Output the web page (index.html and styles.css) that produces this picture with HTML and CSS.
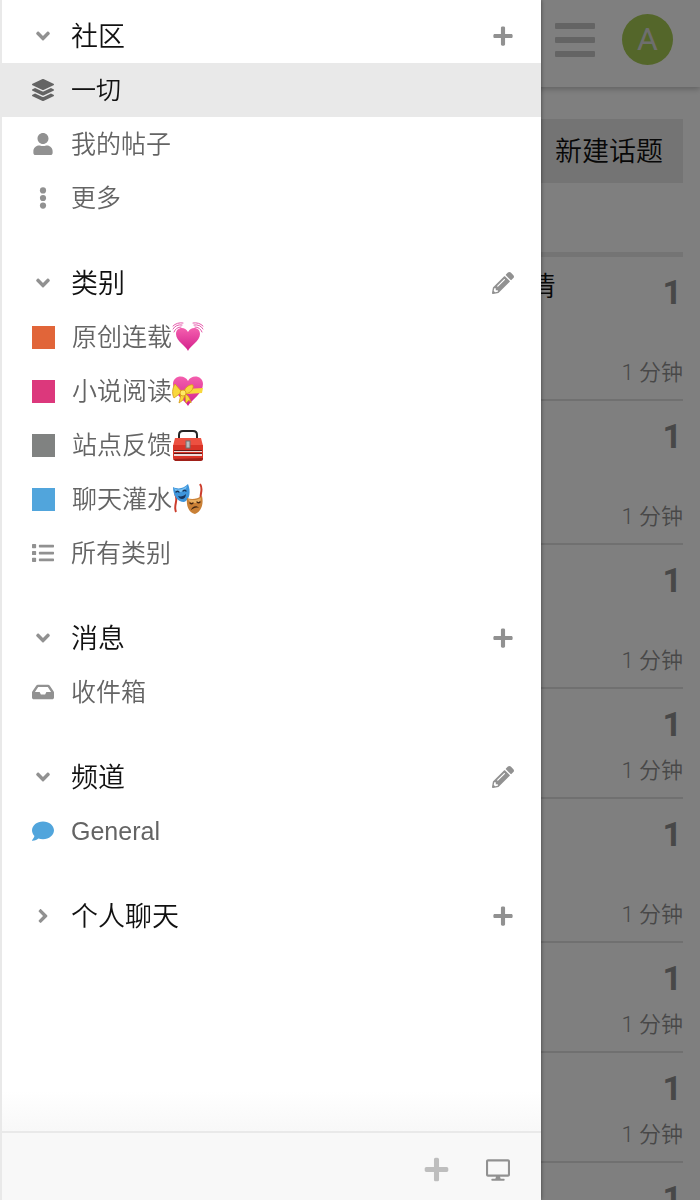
FILE: index.html
```
<!DOCTYPE html>
<html lang="zh-CN">
<head>
  <meta charset="UTF-8">
  <meta name="viewport" content="width=device-width, initial-scale=1.0">
  <title>社区</title>
  <link rel="stylesheet" href="styles.css">
</head>
<body>
  <!-- Icon sprite -->
  <svg class="sprite" aria-hidden="true">
    <symbol id="angle-down" viewBox="-96 0 512 512"><path d="M143 352.3L7 216.3c-9.4-9.4-9.4-24.6 0-33.9l22.6-22.6c9.4-9.4 24.6-9.4 33.9 0l96.4 96.4 96.4-96.4c9.4-9.4 24.6-9.4 33.9 0l22.6 22.6c9.4 9.4 9.4 24.6 0 33.9l-136 136c-9.2 9.4-24.4 9.4-33.8 0z"/></symbol>
    <symbol id="angle-right" viewBox="-128 0 512 512"><path d="M224.3 273l-136 136c-9.4 9.4-24.6 9.4-33.9 0l-22.6-22.6c-9.4-9.4-9.4-24.6 0-33.9l96.4-96.4-96.4-96.4c-9.4-9.4-9.4-24.6 0-33.9L54.3 103c9.4-9.4 24.6-9.4 33.9 0l136 136c9.5 9.4 9.5 24.6.1 34z"/></symbol>
    <symbol id="plus" viewBox="-32 0 512 512"><path d="M416 208H272V64c0-17.67-14.33-32-32-32h-32c-17.67 0-32 14.33-32 32v144H32c-17.67 0-32 14.33-32 32v32c0 17.67 14.33 32 32 32h144v144c0 17.67 14.33 32 32 32h32c17.67 0 32-14.33 32-32V304h144c17.67 0 32-14.33 32-32v-32c0-17.67-14.33-32-32-32z"/></symbol>
    <symbol id="pencil" viewBox="0 0 512 512"><path d="M497.9 142.1l-46.1 46.1c-4.7 4.7-12.3 4.7-17 0l-111-111c-4.7-4.7-4.7-12.3 0-17l46.1-46.1c18.7-18.7 49.1-18.7 67.9 0l60.1 60.1c18.8 18.7 18.8 49.1 0 67.9zM284.2 99.8L21.6 362.4.4 483.9c-2.9 16.4 11.4 30.6 27.8 27.8l121.5-21.3 262.6-262.6c4.7-4.7 4.7-12.3 0-17l-111-111c-4.8-4.7-12.4-4.7-17.1 0zM124.1 339.9c-5.5-5.5-5.5-14.3 0-19.8l154-154c5.5-5.5 14.3-5.5 19.8 0s5.5 14.3 0 19.8l-154 154c-5.5 5.5-14.3 5.5-19.8 0zM88 424h48v36.3l-64.5 11.3-31.1-31.1L51.7 376H88v48z"/></symbol>
    <symbol id="layers" viewBox="0 0 512 512"><path d="M12.41 148.02l232.94 105.67c6.8 3.09 14.49 3.09 21.29 0l232.94-105.67c16.55-7.51 16.55-32.52 0-40.03L266.65 2.31a25.607 25.607 0 0 0-21.29 0L12.41 107.98c-16.55 7.51-16.55 32.53 0 40.04zm487.18 88.28l-58.09-26.33-161.64 73.27c-7.56 3.43-15.59 5.17-23.86 5.17s-16.29-1.74-23.86-5.17L70.51 209.97l-58.1 26.33c-16.55 7.5-16.55 32.5 0 40l232.94 105.59c6.8 3.08 14.49 3.08 21.29 0L499.59 276.3c16.55-7.5 16.55-32.5 0-40zm0 127.8l-57.87-26.23-161.86 73.37c-7.56 3.43-15.59 5.17-23.86 5.17s-16.29-1.74-23.86-5.17L70.29 337.87 12.41 364.1c-16.55 7.5-16.55 32.5 0 40l232.94 105.59c6.8 3.08 14.49 3.08 21.29 0L499.59 404.1c16.55-7.5 16.55-32.5 0-40z"/></symbol>
    <symbol id="user" viewBox="-32 0 512 512"><path d="M224 256c70.7 0 128-57.3 128-128S294.7 0 224 0 96 57.3 96 128s57.3 128 128 128zm89.6 32h-16.7c-22.2 10.2-46.9 16-72.9 16s-50.6-5.8-72.9-16h-16.7C60.2 288 0 348.2 0 422.4V464c0 26.5 21.5 48 48 48h352c26.5 0 48-21.5 48-48v-41.6c0-74.2-60.2-134.4-134.4-134.4z"/></symbol>
    <symbol id="dots" viewBox="0 0 512 512"><circle cx="256" cy="80" r="72"/><circle cx="256" cy="256" r="72"/><circle cx="256" cy="432" r="72"/></symbol>
    <symbol id="list" viewBox="0 0 512 512"><path d="M80 368H16a16 16 0 0 0-16 16v64a16 16 0 0 0 16 16h64a16 16 0 0 0 16-16v-64a16 16 0 0 0-16-16zm0-320H16A16 16 0 0 0 0 64v64a16 16 0 0 0 16 16h64a16 16 0 0 0 16-16V64a16 16 0 0 0-16-16zm0 160H16a16 16 0 0 0-16 16v64a16 16 0 0 0 16 16h64a16 16 0 0 0 16-16v-64a16 16 0 0 0-16-16zm416 176H176a16 16 0 0 0-16 16v32a16 16 0 0 0 16 16h320a16 16 0 0 0 16-16v-32a16 16 0 0 0-16-16zm0-320H176a16 16 0 0 0-16 16v32a16 16 0 0 0 16 16h320a16 16 0 0 0 16-16V80a16 16 0 0 0-16-16zm0 160H176a16 16 0 0 0-16 16v32a16 16 0 0 0 16 16h320a16 16 0 0 0 16-16v-32a16 16 0 0 0-16-16z"/></symbol>
    <symbol id="inbox" viewBox="0 0 576 512"><path d="M567.938 243.908L462.25 85.374A48.003 48.003 0 0 0 422.311 64H153.689a48 48 0 0 0-39.938 21.374L8.062 243.908A47.994 47.994 0 0 0 0 270.533V400c0 26.51 21.49 48 48 48h480c26.51 0 48-21.49 48-48V270.533a47.994 47.994 0 0 0-8.062-26.625zM162.252 128h251.497l85.333 128H376l-32 64H232l-32-64H76.918l85.334-128z"/></symbol>
    <symbol id="comment" viewBox="0 0 512 512"><path d="M256 32C114.6 32 0 125.1 0 240c0 49.6 21.4 95 57 130.7C44.5 421.1 2.7 466 2.2 466.5c-2.2 2.3-2.8 5.7-1.5 8.7S4.8 480 8 480c66.3 0 116-31.8 140.6-51.4 32.7 12.3 69 19.4 107.4 19.4 141.4 0 256-93.1 256-208S397.4 32 256 32z"/></symbol>
    <symbol id="desktop" viewBox="0 0 576 512"><path d="M528 0H48C21.5 0 0 21.5 0 48v320c0 26.5 21.5 48 48 48h192l-16 48h-72c-13.3 0-24 10.7-24 24s10.7 24 24 24h272c13.3 0 24-10.7 24-24s-10.7-24-24-24h-72l-16-48h192c26.5 0 48-21.5 48-48V48c0-26.5-21.5-48-48-48zm-2 366H50V50h476v316z"/></symbol>
    <symbol id="bars" viewBox="0 0 40 36"><rect y="1" width="40" height="6" rx="1"/><rect y="15" width="40" height="6" rx="1"/><rect y="29" width="40" height="6" rx="1"/></symbol>
  </svg>

  <header class="site-header">
    <button type="button" class="icon-button" aria-label="菜单"><svg class="bars"><use href="#bars"/></svg></button>
    <a href="#" class="avatar">A</a>
  </header>

  <main class="content">
    <div class="toolbar">
      <button type="button" class="new-topic">新建话题</button>
    </div>
    <ul class="topics">
      <li class="topic tall"><a href="#" class="topic-title">情</a><div class="topic-stats"><span class="count">1</span><span class="age">1 分钟</span></div></li>
      <li class="topic tall"><div class="topic-stats"><span class="count">1</span><span class="age">1 分钟</span></div></li>
      <li class="topic tall"><div class="topic-stats"><span class="count">1</span><span class="age">1 分钟</span></div></li>
      <li class="topic"><div class="topic-stats"><span class="count">1</span><span class="age">1 分钟</span></div></li>
      <li class="topic tall"><div class="topic-stats"><span class="count">1</span><span class="age">1 分钟</span></div></li>
      <li class="topic"><div class="topic-stats"><span class="count">1</span><span class="age">1 分钟</span></div></li>
      <li class="topic"><div class="topic-stats"><span class="count">1</span><span class="age">1 分钟</span></div></li>
      <li class="topic"><div class="topic-stats"><span class="count">1</span></div></li>
    </ul>
  </main>

  <div class="overlay"></div>

  <aside class="sidebar">
    <nav class="sections">
      <section class="section">
        <div class="section-header">
          <button type="button" class="section-toggle"><svg class="icon"><use href="#angle-down"/></svg><span class="label">社区</span></button>
          <button type="button" class="icon-button" aria-label="新建"><svg class="icon"><use href="#plus"/></svg></button>
        </div>
        <a href="#" class="link active"><svg class="icon"><use href="#layers"/></svg><span class="label">一切</span></a>
        <a href="#" class="link"><svg class="icon"><use href="#user"/></svg><span class="label">我的帖子</span></a>
        <a href="#" class="link"><svg class="icon"><use href="#dots"/></svg><span class="label">更多</span></a>
      </section>

      <section class="section">
        <div class="section-header">
          <button type="button" class="section-toggle"><svg class="icon"><use href="#angle-down"/></svg><span class="label">类别</span></button>
          <button type="button" class="icon-button" aria-label="编辑类别"><svg class="icon"><use href="#pencil"/></svg></button>
        </div>
        <a href="#" class="link"><span class="square orange"></span><span class="label">原创连载</span><svg class="emoji" viewBox="0 0 32 32">
          <defs><linearGradient id="heart-fill" x1="0" y1="0" x2="0" y2="1"><stop offset="0" stop-color="#f45fae"/><stop offset="1" stop-color="#d3208c"/></linearGradient></defs>
          <path fill="url(#heart-fill)" d="M16 30C14 25 4 20 4 13c0-7 9-8 12-2 3-6 12-5 12 2 0 7-10 12-12 17z"/>
          <path fill="none" stroke="#e658ab" stroke-width="1" stroke-linecap="round" d="M1 5Q5 1 11 2M1 8Q4 3 10 4M2 11Q4 6 9 6M31 5Q27 1 21 2M31 8Q28 3 22 4M30 11Q28 6 23 6"/>
        </svg></a>
        <a href="#" class="link"><span class="square pink"></span><span class="label">小说阅读</span><svg class="emoji" viewBox="0 0 32 32">
          <path fill="url(#heart-fill)" d="M16 31C13 25 1 19 1 9 1 0 13-1 16 6c3-7 15-6 15 3 0 10-12 16-15 22z"/>
          <path fill="#f8d83d" d="M14 14l17-1-1 5-15 1z"/>
          <path fill="#f8d83d" stroke="#d79a16" stroke-width=".8" stroke-linejoin="round" d="M10 17L3 9c-3 5-3 10-1 14zM12 17c1-5 6-8 9-7 1 4-2 8-8 9zM9 19l-2 9 4-3 2-5zM13 20l1 8 3-3 2 3c-1-5-3-8-6-9z"/>
          <circle cx="11" cy="18" r="3" fill="#ffe965" stroke="#d79a16" stroke-width=".8"/>
        </svg></a>
        <a href="#" class="link"><span class="square gray"></span><span class="label">站点反馈</span><svg class="emoji" viewBox="0 0 32 32">
          <path fill="none" stroke="#252525" stroke-width="2" d="M7 10V6c0-3 2-4 4-4h10c2 0 4 1 4 4v4"/>
          <path fill="#ed5040" d="M3 9h26l2 8H1z"/>
          <path fill="#d93427" d="M1 16h30v13c0 1-1 2-2 2H3c-1 0-2-1-2-2z"/>
          <path fill="#a02019" d="M1 30l30-1v1c0 1-1 2-2 2H3z"/>
          <path fill="#ecdcda" d="M2 22h28v1H2zM2 25h28v2H2z"/>
          <path fill="#651815" d="M2 21h28v1H2zM2 24h28v1H2z"/>
          <rect x="14" y="12" width="4" height="7" fill="#bbb" stroke="#707070"/>
        </svg></a>
        <a href="#" class="link"><span class="square blue"></span><span class="label">聊天灌水</span><svg class="emoji" viewBox="0 0 32 32">
          <path fill="none" stroke="#cc3d2c" stroke-width="2" d="M3 11c4 6-2 11 1 18M28 1c4 6-1 9 1 18"/>
          <path fill="#3e95db" d="M1 4c6 3 11 1 15-3 3 7 2 16-4 18C6 19 1 13 1 4z"/>
          <path fill="#78c2f4" d="M2 5c5 3 9 1 13-2-1 4-5 6-8 6-2 0-4-1-5-4z"/>
          <path fill="none" stroke="#17345c" stroke-width="1.3" stroke-linecap="round" d="M4 9c1-1 2-1 3 0M11 8c1-1 2-1 3 0"/>
          <path fill="#17345c" d="M6 13c3 1 6 0 8-2 0 3-2 5-4 5-2 0-3-1-4-3z"/>
          <path fill="#c98036" d="M15 15c5 2 10 1 15-2 2 8-1 16-7 18-6-1-9-8-8-16z"/>
          <path fill="#e6ac60" d="M16 16c5 2 9 1 13-1 0 4-3 5-6 5s-6-1-7-4z"/>
          <path fill="none" stroke="#422512" stroke-width="1.3" stroke-linecap="round" d="M18 20c1 1 2 1 3 0M25 19c1 1 2 1 3 0"/>
          <path fill="#422512" d="M19 27c1-4 6-5 8-2-3-1-5 0-8 2z"/>
        </svg></a>
        <a href="#" class="link"><svg class="icon"><use href="#list"/></svg><span class="label">所有类别</span></a>
      </section>

      <section class="section">
        <div class="section-header">
          <button type="button" class="section-toggle"><svg class="icon"><use href="#angle-down"/></svg><span class="label">消息</span></button>
          <button type="button" class="icon-button" aria-label="新消息"><svg class="icon"><use href="#plus"/></svg></button>
        </div>
        <a href="#" class="link"><svg class="icon"><use href="#inbox"/></svg><span class="label">收件箱</span></a>
      </section>

      <section class="section">
        <div class="section-header">
          <button type="button" class="section-toggle"><svg class="icon"><use href="#angle-down"/></svg><span class="label">频道</span></button>
          <button type="button" class="icon-button" aria-label="编辑频道"><svg class="icon"><use href="#pencil"/></svg></button>
        </div>
        <a href="#" class="link"><svg class="icon channel"><use href="#comment"/></svg><span>General</span></a>
      </section>

      <section class="section">
        <div class="section-header">
          <button type="button" class="section-toggle"><svg class="icon"><use href="#angle-right"/></svg><span class="label">个人聊天</span></button>
          <button type="button" class="icon-button" aria-label="新聊天"><svg class="icon"><use href="#plus"/></svg></button>
        </div>
      </section>
    </nav>

    <footer class="sidebar-footer">
      <button type="button" class="icon-button add" aria-label="添加分区"><svg class="icon"><use href="#plus"/></svg></button>
      <button type="button" class="icon-button" aria-label="桌面视图"><svg class="icon"><use href="#desktop"/></svg></button>
    </footer>
  </aside>
</body>
</html>
```
FILE: styles.css
```
* {
  box-sizing: border-box;
}

body {
  margin: 0;
  height: 100vh;
  overflow: hidden;
  background: #fff;
  color: #111;
  font-family: "Liberation Sans", "Noto Sans CJK SC", sans-serif;
  font-size: 25px;
  font-weight: 350;
}

button {
  padding: 0;
  border: none;
  background: none;
  color: inherit;
  font: inherit;
  cursor: pointer;
}

a {
  color: inherit;
  text-decoration: none;
}

svg {
  display: block;
  fill: currentColor;
}

.sprite {
  display: none;
}

.icon {
  width: 22px;
  height: 22px;
  flex: none;
  color: #919191;
}

.icon-button {
  display: flex;
}

/* Page behind the drawer */
.site-header {
  display: flex;
  justify-content: flex-end;
  align-items: center;
  gap: 27px;
  height: 87px;
  padding: 0 27px 8px 0;
  box-shadow: 0 2px 6px rgba(0, 0, 0, 0.25);
}

.bars {
  width: 40px;
  height: 36px;
  color: #c8c8c8;
}

.avatar {
  width: 51px;
  height: 51px;
  border-radius: 50%;
  background: #a8cc54;
  color: #ddd;
  font-family: Roboto, sans-serif;
  font-size: 32px;
  font-weight: 400;
  line-height: 51px;
  text-align: center;
}

.content {
  padding: 32px 17px 0;
}

.toolbar {
  display: flex;
  justify-content: flex-end;
  margin-bottom: 69px;
}

.new-topic {
  height: 64px;
  padding: 0 20px 4px;
  background: #e9e9e9;
  font-size: 27px;
}

.topics {
  margin: 0;
  padding: 0;
  border-top: 5px solid #e9e9e9;
  list-style: none;
}

.topic {
  display: flex;
  justify-content: flex-end;
  min-height: 110px;
  padding: 15px 0 10px;
  border-bottom: 2px solid #e0e0e0;
}

.topic.tall {
  min-height: 144px;
}

.topic-title {
  margin-right: 66px;
  font-size: 27px;
  line-height: 30px;
}

.topic-stats {
  display: flex;
  flex-direction: column;
  justify-content: space-between;
  align-items: flex-end;
  color: #919191;
  font-family: Roboto, "Noto Sans CJK SC", sans-serif;
}

.count {
  padding-right: 1px;
  font-size: 34px;
  font-weight: 700;
  line-height: 40px;
}

.age {
  font-size: 22px;
  line-height: 32px;
}

.overlay {
  position: fixed;
  inset: 0;
  background: rgba(0, 0, 0, 0.5);
}

/* Drawer */
.sidebar {
  position: fixed;
  top: 0;
  bottom: 0;
  left: 0;
  display: flex;
  flex-direction: column;
  width: 541px;
  max-width: 90%;
  border-left: 2px solid #e9e9e9;
  background: #fff;
  box-shadow: 0 0 4px rgba(0, 0, 0, 0.5);
}

.sections {
  display: flex;
  flex: 1;
  flex-direction: column;
  gap: 31px;
  padding-top: 9px;
  overflow: hidden;
}

.section-header {
  display: flex;
  justify-content: space-between;
  align-items: center;
  height: 54px;
  padding: 0 27px 0 30px;
}

.section-toggle {
  display: flex;
  align-items: center;
  gap: 17px;
  font-size: 27px;
}

.link {
  display: flex;
  align-items: center;
  height: 54px;
  padding-left: 30px;
  color: #646464;
}

/* CJK glyphs sit low in the line box */
.label {
  padding-bottom: 4px;
}

.link .icon,
.square {
  margin-right: 17px;
}

.link.active {
  background: #e9e9e9;
  color: #111;
}

.link.active .icon {
  color: #646464;
}

.link .channel {
  color: #51a5dc;
}

.square {
  width: 23px;
  height: 23px;
}

.orange {
  background: #e16539;
}

.pink {
  background: #dc387c;
}

.gray {
  background: #808281;
}

.blue {
  background: #51a5dc;
}

.emoji {
  width: 32px;
  height: 32px;
}

.sidebar-footer {
  position: relative;
  display: flex;
  justify-content: flex-end;
  align-items: center;
  gap: 36px;
  height: 69px;
  padding: 6px 31px 0 0;
  border-top: 2px solid #e9e9e9;
  background: #f8f8f8;
}

/* Fades the list out above the footer */
.sidebar-footer::before {
  content: "";
  position: absolute;
  right: 0;
  bottom: calc(100% + 2px);
  left: 0;
  height: 40px;
  background: linear-gradient(to bottom, rgba(248, 248, 248, 0), #f8f8f8);
}

.sidebar-footer .icon {
  width: 24px;
  height: 24px;
}

.sidebar-footer .add .icon {
  width: 27px;
  height: 27px;
  color: #bebebe;
}
```
